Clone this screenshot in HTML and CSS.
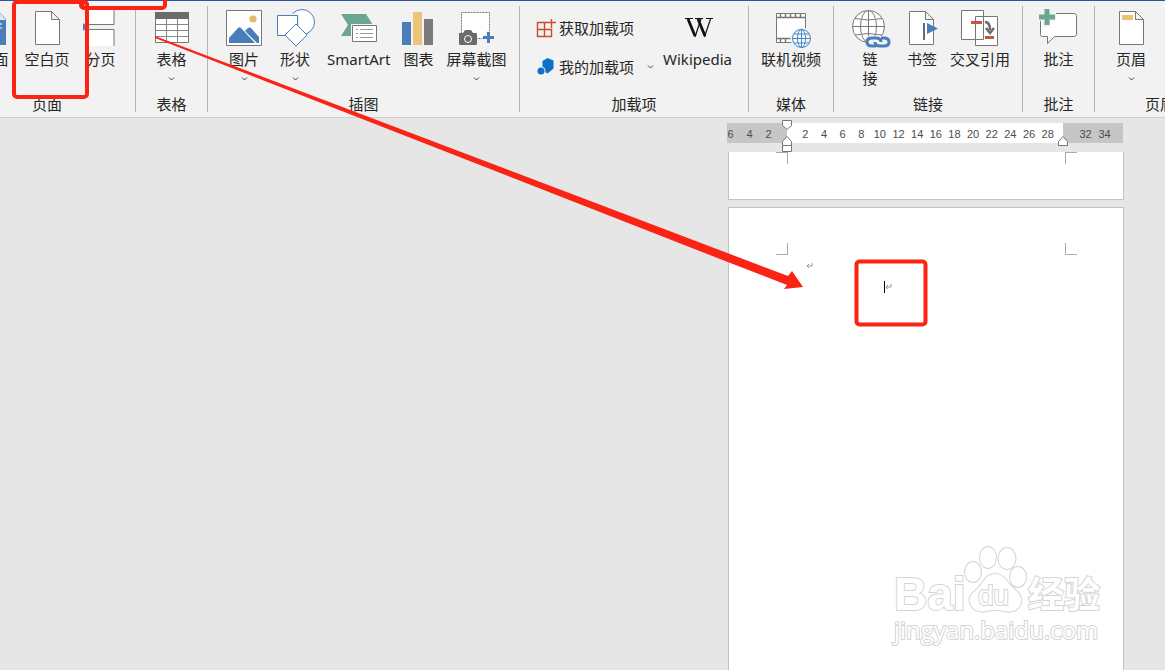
FILE: index.html
```html
<!DOCTYPE html>
<html lang="zh-CN">
<head>
<meta charset="utf-8">
<title>插入空白页</title>
<link rel="stylesheet" href="styles.css">
</head>
<body>
<header class="ribbon">
  <section class="group group-pages">
    <div class="tools">
      <button class="tool"><svg class="icon" viewBox="0 0 38 38"><path d="M8 3h17l7 7v26H8z" fill="#4a7ebb"/><path d="M25 3v8h7" fill="#dfe8f3"/><path d="M12 15h16M12 19h16M12 23h13" stroke="#fff"/></svg><span>封面</span><svg class="caret" viewBox="0 0 7 4"><path d="M1 .5 3.500 3 6 .5"/></svg></button>
      <button class="tool"><svg class="icon" viewBox="0 0 38 38"><path class="sheet" d="M7.500 2.500h16l8 8v25h-24zM23.500 2.500v8h8"/></svg><span>空白页</span></button>
      <button class="tool"><svg class="icon" viewBox="0 0 38 38"><path d="M7 0h25v15.500H7zM7 20.500h25V37H7z" fill="#fff"/><path d="M7 15.500h25V0M7 20.500h25V37" fill="none" stroke="#777"/><path d="M1 14v8l5-4z" fill="#4a7ebb"/></svg><span>分页</span></button>
    </div>
    <h2 class="group-name">页面</h2>
  </section>
  <section class="group group-small">
    <div class="tools">
      <button class="tool"><svg class="icon" viewBox="0 0 38 38"><path d="M3.500 3.500h33v30h-33z" fill="#fff" stroke="#777"/><path d="M3 3h34v7H3z" fill="#6b6b6b"/><path d="M14.500 10v23M25.500 10v23M4 15.500h32M4 21.500h32M4 27.500h32" stroke="#888" fill="none"/></svg><span>表格</span><svg class="caret" viewBox="0 0 7 4"><path d="M1 .5 3.500 3 6 .5"/></svg></button>
    </div>
    <h2 class="group-name">表格</h2>
  </section>
  <section class="group group-illustrations">
    <div class="tools">
      <button class="tool tool-medium"><svg class="icon" viewBox="0 0 38 38"><path d="M1.500 1.500h35v35h-35z" fill="#fff" stroke="#777"/><circle cx="28" cy="10" r="3.600" fill="#e3bb70"/><path d="M4 34v-5l9-10q1.500-1.500 3 0l14 15zM20 22l3-3q1.500-1 3 0l8 9v6h-2z" fill="#4a7ebb"/></svg><span>图片</span><svg class="caret" viewBox="0 0 7 4"><path d="M1 .5 3.500 3 6 .5"/></svg></button>
      <button class="tool tool-wide"><svg class="icon" viewBox="0 0 38 38"><g fill="#fff" stroke="#4a7ebb"><circle cx="26" cy="13" r="12.500"/><path d="M1.500 6.500h21v20h-21z" stroke="#f2f2f2" stroke-width="3"/><path d="M1.500 6.500h20v20h-20z"/><path d="M20 15 31 26 20 37 9 26z"/></g></svg><span>形状</span><svg class="caret" viewBox="0 0 7 4"><path d="M1 .5 3.500 3 6 .5"/></svg></button>
      <button class="tool"><svg class="icon" viewBox="0 0 38 38"><path d="M1 5h25l7 11-7 11H1l7-11z" fill="#6ca592"/><path d="M11 15h27v20H11z" fill="#f2f2f2"/><path d="M12.500 16.500h24v16h-24z" fill="#fff" stroke="#777"/><path d="M16 20.500h2m2 0h13M16 24.500h2m2 0h13M16 28.500h2m2 0h13" stroke="#999"/></svg><span>SmartArt</span></button>
      <button class="tool tool-medium"><svg class="icon" viewBox="0 0 38 38"><path d="M3 13h9v23H3z" fill="#4a7ebb"/><path d="M14 3h9v33h-9z" fill="#ebc678"/><path d="M25 10h9v26h-9z" fill="#7b7b7b"/></svg><span>图表</span></button>
      <button class="tool"><svg class="icon" viewBox="0 0 38 38"><path d="M4.500 3.500h28v26h-28z" fill="#fff" stroke="#777" stroke-dasharray="2 1"/><path d="M1 24h19v13H1z" fill="#f2f2f2"/><path d="M2 24h4l2-3h6l2 3h3q1 0 1 1v10q0 1-1 1H3q-1 0-1-1z" fill="#6b6b6b"/><circle cx="11" cy="30" r="3.500" fill="none" stroke="#fff"/><path d="M31.500 22v12M25.500 28h12" stroke="#f2f2f2" stroke-width="6"/><path d="M31.500 23v11M26 28.500h11" stroke="#4a7ebb" stroke-width="3"/></svg><span>屏幕截图</span><svg class="caret" viewBox="0 0 7 4"><path d="M1 .5 3.500 3 6 .5"/></svg></button>
    </div>
    <h2 class="group-name">插图</h2>
  </section>
  <section class="group group-addins">
    <div class="tools">
      <div class="addin-list">
        <button class="row-tool"><svg class="row-icon" viewBox="0 0 20 20"><path d="M1.500 4.500h7v14h-7zM1.500 11.500h14v7h-14zM8.500 4.500h3M8.500 11v7M15.500 1v9M11 4.500h9" fill="none" stroke="#cf4a26" stroke-width="1.400"/></svg><span>获取加载项</span></button>
        <button class="row-tool"><svg class="row-icon" viewBox="0 0 20 20"><path d="m11.500 1 6 2.500v8l-6 5-5-3V4z" fill="#0f6fc6"/><circle cx="5" cy="14" r="4.500" fill="#f2f2f2"/><circle cx="5" cy="14" r="3.500" fill="#0f6fc6"/></svg><span>我的加载项</span><svg class="caret caret-row" viewBox="0 0 7 4"><path d="M1 .5 3.500 3 6 .5"/></svg></button>
      </div>
      <button class="tool"><svg class="icon" viewBox="0 0 38 38"><g fill="none" stroke="#111"><path d="M6 9.500h8M16 9.500h8M27 9.500h7"/><path d="M9 10l7 17M19 10l7 17" stroke-width="2.800"/><path d="M22 10l-6 18M31.500 10l-6 18" stroke-width="1.200"/></g></svg><span>Wikipedia</span></button>
    </div>
    <h2 class="group-name">加载项</h2>
  </section>
  <section class="group group-media">
    <div class="tools">
      <button class="tool"><svg class="icon" viewBox="0 0 38 38"><path d="M4.500 4.500h29v29h-29z" fill="#fff" stroke="#777"/><path d="M4 8.500h30M4 29.500h20M8.500 4v4m5-4v4m5-4v4m5-4v4m5-4v4M8.500 30v4m5-4v4" stroke="#777" stroke-width="1.500"/><circle cx="29.500" cy="29.500" r="11" fill="#f2f2f2"/><g fill="#fff" stroke="#4285c5"><circle cx="29.500" cy="29.500" r="9"/><ellipse cx="29.500" cy="29.500" rx="4" ry="9"/><path d="M20.500 29.500h18M22 25h15M22 34h15M29.500 20.500v18"/></g></svg><span>联机视频</span></button>
    </div>
    <h2 class="group-name">媒体</h2>
  </section>
  <section class="group group-links">
    <div class="tools">
      <button class="tool tool-link"><svg class="icon" viewBox="0 0 38 38"><g fill="#fff" stroke="#777"><circle cx="17.500" cy="17.500" r="16"/><ellipse cx="17.500" cy="17.500" rx="8" ry="16"/><path d="M1.500 17.500h32M4 9.500q13 3 27 0M4 26q13-3 27 0M17.500 1.500v32"/></g><path d="M15 27h20v11H15z" fill="#f2f2f2"/><g fill="none" stroke="#4a7ebb" stroke-width="3"><path d="M25 37h-4q-5 0-5-4t5-4h4q5 0 5 4"/><path d="M30 29h3q5 0 5 4t-5 4h-4q-5 0-5-4"/></g></svg><span>链<br>接</span></button>
      <button class="tool tool-medium"><svg class="icon" viewBox="0 0 38 38"><path class="sheet" d="M6.500 2.500h16l8 8v25h-24zM22.500 2.500v8h8"/><path d="M21 14v17" stroke="#6b6b6b" stroke-width="2"/><path d="M24 14v11l11-5.500z" fill="#4a7ebb"/></svg><span>书签</span></button>
      <button class="tool"><svg class="icon" viewBox="0 0 38 38"><path d="M14.500 7.500h22v29h-22zM.5 1.500h22v29H.5z" fill="#fff" stroke="#777"/><path d="M10 13.500h11M24 28.500h9" stroke="#c8573c" stroke-width="3"/><path d="M24 13q5 0 5 8m-4-2 4 5 4-5" fill="none" stroke="#6b6b6b" stroke-width="2.500"/></svg><span>交叉引用</span></button>
    </div>
    <h2 class="group-name">链接</h2>
  </section>
  <section class="group group-small">
    <div class="tools">
      <button class="tool"><svg class="icon" viewBox="0 0 38 38"><path d="M4.500 4.500h30q3 0 3 2v19q0 2-3 2h-19l-7 7v-7h-5q-2 0-2-2v-19q0-2 3-2z" fill="#fff" stroke="#777"/><path d="M8 0v18M-1 8h18" stroke="#f2f2f2" stroke-width="8"/><path d="M8 0v16M0 8h16" stroke="#6ca592" stroke-width="5"/></svg><span>批注</span></button>
    </div>
    <h2 class="group-name">批注</h2>
  </section>
  <section class="group group-header">
    <div class="tools">
      <button class="tool"><svg class="icon" viewBox="0 0 38 38"><path class="sheet" d="M7.500 2.500h16l8 8v25h-24zM23.500 2.500v8h8"/><path d="M10 6h11v5H10z" fill="#e9c273"/></svg><span>页眉</span><svg class="caret" viewBox="0 0 7 4"><path d="M1 .5 3.500 3 6 .5"/></svg></button>
    </div>
    <h2 class="group-name">页眉和页脚</h2>
  </section>
</header>

<main class="workspace">
  <div class="document">
    <div class="ruler">
      <div class="ruler-margin ruler-left"><span>6</span><span>4</span><span>2</span></div>
      <div class="ruler-body"><span>2</span><span>4</span><span>6</span><span>8</span><span>10</span><span>12</span><span>14</span><span>16</span><span>18</span><span>20</span><span>22</span><span>24</span><span>26</span><span>28</span></div>
      <div class="ruler-margin ruler-right"><span>32</span><span>34</span></div>
      <svg class="marker marker-left" viewBox="0 0 12 34"><path d="M1.500 1.500h9v5L6 10.500l-4.500-4zM1.500 32.500v-10L6 17.500l4.500 5v10zM1.500 26.500h9"/></svg>
      <svg class="marker marker-right" viewBox="0 0 12 34"><path d="M1.500 26.500v-4L6 17.500l4.500 5v4z"/></svg>
    </div>
    <article class="page page-previous">
      <div class="crops"><i class="crop crop-tl"></i><i class="crop crop-tr"></i></div>
    </article>
    <article class="page page-current">
      <div class="crops"><i class="crop crop-bl"></i><i class="crop crop-br"></i></div>
      <p class="line"><svg class="return" viewBox="0 0 7 7"><path d="M6 1v3H1M3 2 1 4l2 2"/></svg></p>
      <p class="line line-indented"><i class="cursor"></i><svg class="return" viewBox="0 0 7 7"><path d="M6 1v3H1M3 2 1 4l2 2"/></svg></p>
      <svg class="watermark" viewBox="0 0 220 110">
        <g class="watermark-paint">
          <text class="mark-name" x="4" y="69">Bai</text>
          <ellipse cx="83" cy="31" rx="8" ry="10"/>
          <ellipse cx="98" cy="16.500" rx="8" ry="10.500"/>
          <ellipse cx="117" cy="17.500" rx="8.500" ry="10.500"/>
          <ellipse cx="128" cy="36" rx="8" ry="10"/>
          <path d="M105 33c-9 0-12 9-17 14s-10 8-8 15 10 10 16 8q9-2 18 0c8 2 16-1 17-9s-4-10-9-15-8-13-17-13z"/>
          <text class="mark-du" x="88" y="64">du</text>
          <text class="mark-cn" x="138" y="67">经验</text>
          <text class="mark-url" x="4" y="98">jingyan.baidu.com</text>
        </g>
      </svg>
    </article>
  </div>
</main>

<svg class="annotations" width="1165" height="670" viewBox="0 0 1165 670" aria-hidden="true">
  <g fill="none" stroke="#fa2314" stroke-width="4">
    <rect x="14" y="2" width="73" height="95" rx="3"/>
    <rect x="82" y="-20" width="83" height="28" rx="3"/>
    <circle cx="84" cy="5" r="3"/>
    <rect x="856.500" y="261.500" width="69" height="63" rx="3"/>
  </g>
  <path d="M155 36 788 276 792 271 803 287 784 289 787 285 720 259 480 165 155 38z" fill="#fa2314"/>
</svg>
</body>
</html>
```
FILE: styles.css
```css
* { box-sizing: border-box; }

body {
  margin: 0;
  min-height: 100vh;
  display: flex;
  flex-direction: column;
  position: relative;
  overflow: hidden;
  background: #e6e6e6;
  color: #262626;
  font: 15px/19px "Noto Sans", "Noto Sans CJK SC", sans-serif;
}

button {
  padding: 0;
  border: 0;
  background: none;
  color: inherit;
  font: inherit;
}

.ribbon {
  display: flex;
  padding: 5px 0;
  overflow: hidden;
  background: #f2f2f2;
  border-top: 1px solid #2b579a;
  border-bottom: 1px solid #cfcfcf;
}

.group {
  flex: none;
  display: flex;
  flex-direction: column;
  justify-content: space-between;
  min-height: 106px;
  padding-top: 3px;
  border-right: 1px solid #b5b5b5;
}

.group-pages { width: 177px; margin-left: -41px; }
.group-small { width: 72px; }
.group-illustrations { width: 312px; }
.group-addins { width: 229px; }
.group-media { width: 85px; }
.group-links { width: 189px; }
.group-header { width: 176px; }

.tools { display: flex; justify-content: center; gap: 9px; }
.group-pages .tools { gap: 16px; }
.group-illustrations .tools { justify-content: flex-start; padding-left: 17px; }
.group-header .tools { justify-content: flex-start; padding-left: 21px; }

.tool {
  display: flex;
  flex-direction: column;
  align-items: center;
  white-space: nowrap;
}

.tool-medium { width: 38px; }
.tool-wide { width: 46px; }
.tool-link { width: 48px; }

.icon { width: 38px; height: 38px; margin: 0 -4px 3px; overflow: visible; }
.sheet { fill: #fff; stroke: #777; }

.caret { width: 7px; height: 4px; margin-top: 8px; fill: none; stroke: #444; }
.caret-row { margin: 0 0 0 10px; }

.group-name {
  margin: 0;
  text-align: center;
  font-size: 15px;
  font-weight: 400;
  line-height: 15px;
}

.addin-list { display: flex; flex-direction: column; gap: 19px; padding-top: 9px; }
.row-tool { display: flex; align-items: center; gap: 3px; }
.row-icon { width: 20px; height: 20px; }

.workspace {
  flex: 1;
  display: flex;
  justify-content: flex-end;
  padding: 5px 41px 0 0;
}

.document { width: 396px; display: flex; flex-direction: column; }

.ruler {
  position: relative;
  display: flex;
  height: 20px;
  margin: 0 1px 9px -1px;
  color: #4c4c4c;
  font: 11px/22px "Liberation Sans", sans-serif;
  text-align: center;
}

.ruler-margin { display: grid; width: 60px; background: #c6c6c6; }
.ruler-left { grid-template-columns: repeat(3, 19px); justify-content: end; padding-right: 9px; }
.ruler-right { grid-template-columns: repeat(2, 19px); padding-left: 13px; }
.ruler-body {
  flex: 1;
  display: grid;
  grid-template-columns: repeat(14, 1fr);
  padding: 0 6px 0 9px;
  background: #fff;
}

.marker { position: absolute; top: -4px; width: 12px; height: 34px; fill: #fff; stroke: #777; }
.marker-left { left: 54px; }
.marker-right { right: 54px; }

.page { background: #fff; border: 1px solid #c3c3c3; }
.page-previous { height: 48px; margin-bottom: 7px; border-top: 0; }
.page-current { position: relative; flex: 1; min-height: 463px; border-bottom: 0; }

.crops { display: flex; justify-content: space-between; padding: 0 46px 0 47px; }
.page-current .crops { padding-top: 35px; }
.crop { width: 12px; height: 12px; border: 0 solid #aaa; }
.crop-tl { border-width: 1px 1px 0 0; }
.crop-tr { border-width: 1px 0 0 1px; }
.crop-bl { border-width: 0 1px 1px 0; }
.crop-br { border-width: 0 0 1px 1px; }

.line { display: flex; align-items: center; height: 21px; margin: 0; padding-left: 77px; }
.line-indented { padding-left: 155px; }
.return { width: 7px; height: 7px; fill: none; stroke: #999; }
.cursor { width: 1px; height: 12px; background: #000; }

.watermark { position: absolute; right: 13px; bottom: 19px; width: 220px; height: 110px; overflow: visible; }
.watermark-paint { fill: #fff; stroke: #d4d4d4; stroke-width: 2; paint-order: stroke; }
.mark-name { font: bold 46px "Liberation Sans", sans-serif; }
.mark-du { font: 28px "Liberation Sans", sans-serif; }
.mark-cn { font: bold 36px "Noto Sans CJK SC", sans-serif; }
.mark-url { font: 24px "Open Sans", sans-serif; }

.annotations { position: absolute; top: 0; left: 0; pointer-events: none; }
```
